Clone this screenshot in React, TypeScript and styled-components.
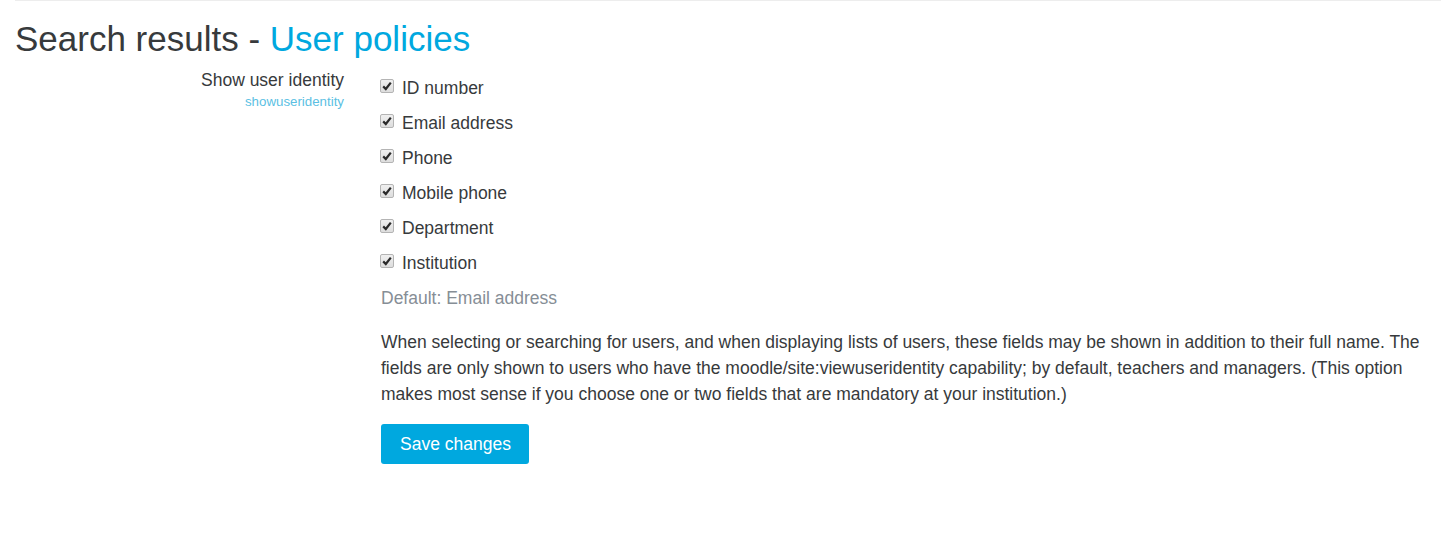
import React, { useState } from "react";
import styled, { createGlobalStyle } from "styled-components";

type TOption = {
  key: string;
  label: string;
};

const OPTIONS: TOption[] = [
  { key: "idnumber", label: "ID number" },
  { key: "email", label: "Email address" },
  { key: "phone1", label: "Phone" },
  { key: "phone2", label: "Mobile phone" },
  { key: "department", label: "Department" },
  { key: "institution", label: "Institution" },
];

const App = (): JSX.Element => {
  // all fields ticked
  const [checked, setChecked] = useState<Record<string, boolean>>(
    Object.fromEntries(OPTIONS.map((o) => [o.key, true]))
  );

  // fn
  const onToggle = (key: string) => {
    setChecked((prev) => ({ ...prev, [key]: !prev[key] }));
  };

  return (
    <Page>
      <GlobalStyle />
      <Container>
        <Heading>
          Search results - <HeadingLink>User policies</HeadingLink>
        </Heading>

        <FormRow>
          <LabelColumn>
            <Label>Show user identity</Label>
            <SettingName>showuseridentity</SettingName>
          </LabelColumn>

          <Content>
            <CheckList>
              {OPTIONS.map((o) => (
                <CheckItem key={o.key} onClick={() => onToggle(o.key)}>
                  <Box>
                    {checked[o.key] && (
                      <svg width="10" height="10" viewBox="0 0 10 10">
                        <path
                          d="M1.2 5.4 L3.8 8 L8.8 1.6"
                          fill="none"
                          stroke="#2a2a2a"
                          strokeWidth="2.2"
                        />
                      </svg>
                    )}
                  </Box>
                  {o.label}
                </CheckItem>
              ))}
            </CheckList>

            <DefaultInfo>Default: Email address</DefaultInfo>

            <Description>
              When selecting or searching for users, and when displaying lists
              of users, these fields may be shown in addition to their full
              name. The fields are only shown to users who have the
              moodle/site:viewuseridentity capability; by default, teachers and
              managers. (This option makes most sense if you choose one or two
              fields that are mandatory at your institution.)
            </Description>

            <SaveButton type="button">Save changes</SaveButton>
          </Content>
        </FormRow>
      </Container>
    </Page>
  );
};

const GlobalStyle = createGlobalStyle`
  body {
    margin: 0;
    background: #fff;
    font-family: "Liberation Sans", Arial, sans-serif;
    font-size: 17.5px;
    line-height: 26px;
    color: #373a3c;
  }
`;

const Page = styled.div`
  padding: 0 9px 0 15px;
`;

const Container = styled.div`
  border-top: 1px solid #ededed;
  min-height: 548px;
`;

const Heading = styled.h2`
  margin: 17px 0 0;
  font-size: 35px;
  line-height: 42px;
  font-weight: normal;
  color: #373a3c;
`;

const HeadingLink = styled.span`
  color: #00a8df;
`;

const FormRow = styled.div`
  display: grid;
  grid-template-columns: 329px 1fr;
  column-gap: 37px;
  margin-top: 7px;
`;

const LabelColumn = styled.div`
  display: flex;
  flex-direction: column;
  align-items: flex-end;
`;

const Label = styled.div`
  line-height: 26px;
`;

const SettingName = styled.div`
  font-size: 13.3px;
  line-height: 18px;
  color: #5bbfe3;
`;

const Content = styled.div`
  display: flex;
  flex-direction: column;
  align-items: flex-start;
  padding-top: 3px;
`;

const CheckList = styled.div`
  display: flex;
  flex-direction: column;
`;

const CheckItem = styled.label`
  display: flex;
  align-items: center;
  gap: 8px;
  height: 35px;
  margin-left: -1px;
  cursor: pointer;
`;

const Box = styled.span`
  box-sizing: border-box;
  width: 14px;
  height: 14px;
  margin-top: -4px;
  border: 1px solid #b4b4b4;
  border-radius: 2px;
  background: linear-gradient(#f0f0f0, #dddddd);
  display: flex;
  align-items: center;
  justify-content: center;
`;

const DefaultInfo = styled.div`
  margin-top: 5px;
  color: #868e96;
`;

const Description = styled.p`
  margin: 18px 0 0;
`;

const SaveButton = styled.button`
  margin-top: 17px;
  height: 40px;
  padding: 0 18px 0 19px;
  border: none;
  border-radius: 3px;
  background: #00a8df;
  color: #fff;
  font-family: inherit;
  font-size: 17.5px;
  cursor: pointer;
`;

export default App;
